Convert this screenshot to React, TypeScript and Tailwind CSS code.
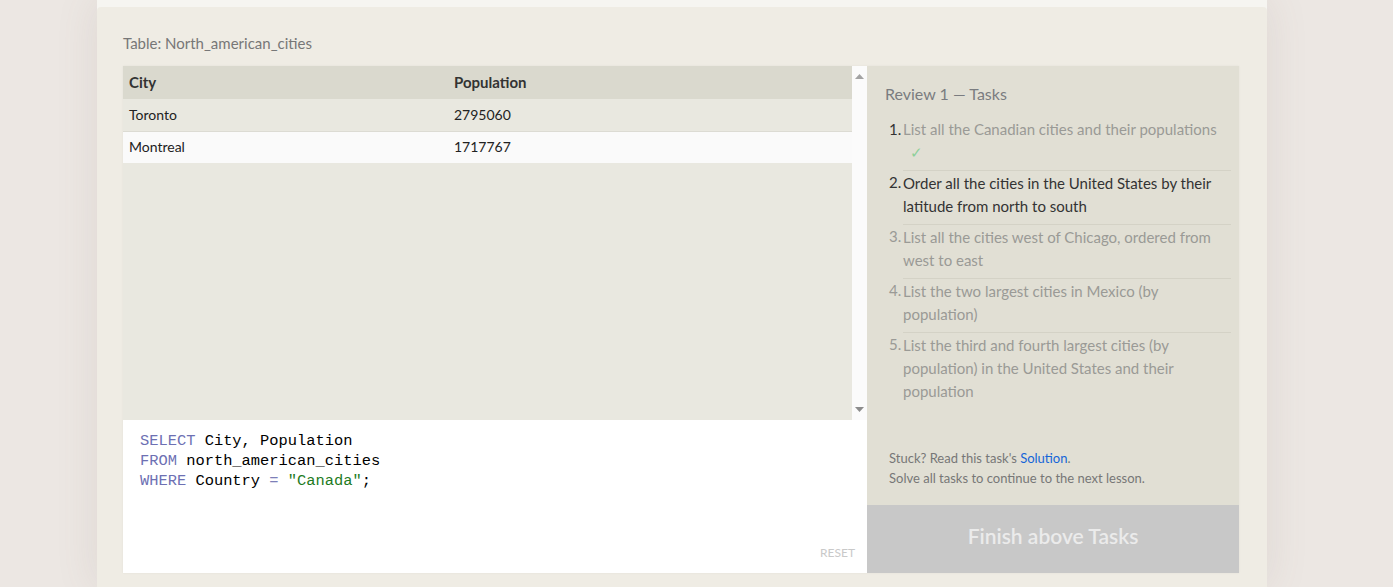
import React from 'react';

const tasks = [
  { n: 1, lines: 'List all the Canadian cities and their populations', state: 'done' },
  { n: 2, lines: 'Order all the cities in the United States by their latitude from north to south', state: 'current' },
  { n: 3, lines: 'List all the cities west of Chicago, ordered from west to east', state: 'todo' },
  { n: 4, lines: 'List the two largest cities in Mexico (by population)', state: 'todo' },
  { n: 5, lines: 'List the third and fourth largest cities (by population) in the United States and their population', state: 'todo' },
];

const rows = [
  { city: 'Toronto', population: '2795060', bg: 'bg-[#e9e8e0]' },
  { city: 'Montreal', population: '1717767', bg: 'bg-[#fafafa]' },
];

function ResultTable() {
  return (
    <div className="flex h-[354px] bg-[#e9e8e0]">
      <div className="flex-1">
        <div className="flex h-[33px] items-center bg-[#dad9ce] text-[15px] font-bold text-[#333]">
          <div className="w-[325px] pl-[6px]">City</div>
          <div className="pl-[6px]">Population</div>
        </div>
        {rows.map((r, i) => (
          <div
            key={r.city}
            className={`flex h-[32px] items-center pb-[2px] text-[14px] text-[#222] ${r.bg} ${i > 0 ? 'border-t border-[#dcdbd3]' : ''}`}
          >
            <div className="w-[325px] pl-[6px]">{r.city}</div>
            <div className="pl-[6px]">{r.population}</div>
          </div>
        ))}
      </div>
      <div className="flex w-[15px] flex-col items-center justify-between bg-[#fbfbfb] py-[8px]">
        <svg width="9" height="5" viewBox="0 0 9 5">
          <path d="M0 5 L4.5 0 L9 5 Z" fill="#a3a3a3" />
        </svg>
        <svg width="9" height="5" viewBox="0 0 9 5">
          <path d="M0 0 L4.5 5 L9 0 Z" fill="#8c8c8c" />
        </svg>
      </div>
    </div>
  );
}

function Editor() {
  const kw = 'text-[#6d70b3]';
  return (
    <div className="relative h-[153px] bg-white">
      <pre className="pl-[17px] pt-[11px] text-[15.4px] leading-[20px] text-black" style={{ fontFamily: '"Liberation Mono", monospace' }}>
        <span className={kw}>SELECT</span> City, Population{'\n'}
        <span className={kw}>FROM</span> north_american_cities{'\n'}
        <span className={kw}>WHERE</span> Country <span className="text-[#7d7fb8]">=</span>{' '}
        <span className="text-[#1e7b1e]">"Canada"</span>;
      </pre>
      <div className="absolute bottom-[11px] right-[12px] text-[12px] text-[#c9c9c9]">RESET</div>
    </div>
  );
}

function TaskPanel() {
  return (
    <div className="flex w-[372px] flex-col bg-[#e1dfd4]">
      <div className="pl-[18px] pt-[18px] text-[16px] leading-[20px] text-[#7a7c80]">Review 1 — Tasks</div>
      <ol className="mt-[14px] pl-[22px] pr-[8px]">
        {tasks.map((t, i) => {
          const numCol = t.state === 'todo' ? 'text-[#9a9a96]' : 'text-[#333]';
          const txtCol = t.state === 'current' ? 'text-[#333]' : 'text-[#9a9a96]';
          return (
            <li key={t.n} className="flex text-[15px] leading-[23px]">
              <span className={`w-[14px] shrink-0 ${numCol}`}>{t.n}.</span>
              <div
                className={`flex-1 pb-[6px] ${i > 0 ? 'pt-[1px]' : ''} ${i < tasks.length - 1 ? 'border-b border-[#d4d2c6]' : ''} ${txtCol}`}
              >
                {t.lines}
                {t.state === 'done' && <div className="pl-[7px] text-[#8dd09a]">✓</div>}
              </div>
            </li>
          );
        })}
      </ol>
      <div className="flex-1" />
      <div className="pb-[17px] pl-[22px] text-[13px] leading-[20px] text-[#777]">
        <div>
          Stuck? Read this task's <span className="text-[#1565d8]">Solution</span>.
        </div>
        <div>Solve all tasks to continue to the next lesson.</div>
      </div>
      <div className="flex h-[68px] items-center justify-center bg-[#c8c8c8] pb-[6px] text-[21px] font-semibold text-[#ebebeb]">
        Finish above Tasks
      </div>
    </div>
  );
}

export default function App() {
  return (
    <div
      className="flex h-[587px] w-full overflow-hidden bg-[#ece7e3] pl-[97px]"
      style={{ fontFamily: 'Lato, "Open Sans", sans-serif' }}
    >
      <div className="flex w-[1170px] flex-col bg-[#f6f5f1] shadow-[0_0_40px_rgba(120,100,90,0.12)]">
        <div className="h-[7px]" />
        <div className="flex-1 rounded-t-[4px] bg-[#efece4] pl-[26px] pr-[28px]">
          <div className="pt-[26px] text-[15px] leading-[20px] text-[#777]">Table: North_american_cities</div>
          <div className="mt-[13px] flex h-[507px] shadow-[0_0_2px_rgba(0,0,0,0.06)]">
            <div className="flex w-[744px] flex-col">
              <ResultTable />
              <Editor />
            </div>
            <TaskPanel />
          </div>
        </div>
      </div>
    </div>
  );
}
